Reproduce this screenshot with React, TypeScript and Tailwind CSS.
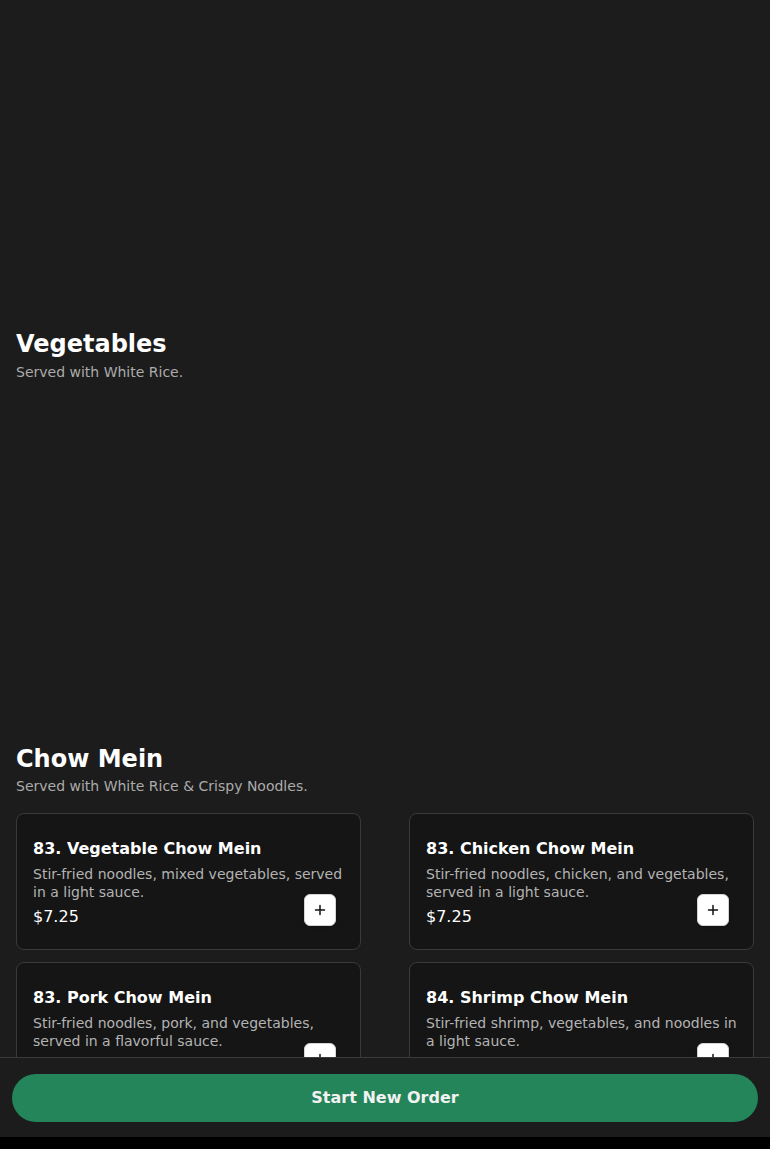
import React from "react";

type Item = { name: string; desc: string; price: string };

const items: Item[] = [
  { name: "83. Vegetable Chow Mein", desc: "Stir-fried noodles, mixed vegetables, served in a light sauce.", price: "$7.25" },
  { name: "83. Chicken Chow Mein", desc: "Stir-fried noodles, chicken, and vegetables, served in a light sauce.", price: "$7.25" },
  { name: "83. Pork Chow Mein", desc: "Stir-fried noodles, pork, and vegetables, served in a flavorful sauce.", price: "$7.25" },
  { name: "84. Shrimp Chow Mein", desc: "Stir-fried shrimp, vegetables, and noodles in a light sauce.", price: "$7.95" },
];

function PlusIcon() {
  return (
    <svg width="12" height="12" viewBox="0 0 12 12" fill="none">
      <path d="M6 1.5v9M1.5 6h9" stroke="#111" strokeWidth="1.5" strokeLinecap="round" />
    </svg>
  );
}

function Card({ item }: { item: Item }) {
  return (
    <div className="relative rounded-lg border border-[#3a3a3a] bg-[#151515] px-4 pt-[23px] pb-5">
      <div className="text-[16px] leading-6 font-bold text-white">{item.name}</div>
      <div className="mt-[5px] text-[14px] leading-[17.5px] text-[#b3b3b3]">{item.desc}</div>
      <div className="mt-1 text-[16px] leading-6 text-white">{item.price}</div>
      <button className="absolute right-6 bottom-[23px] flex h-8 w-8 items-center justify-center rounded-md border border-[#d4d4d4] bg-white shadow-sm">
        <PlusIcon />
      </button>
    </div>
  );
}

export default function App() {
  return (
    <div
      className="min-h-screen bg-[#1c1c1c] text-white"
      style={{ fontFamily: '"DejaVu Sans", sans-serif' }}
    >
      <div className="px-4 pb-32">
        <div className="h-[328px]" />
        <section>
          <h2 className="text-[24px] leading-8 font-bold">Vegetables</h2>
          <p className="mt-[2px] text-[14px] leading-5 text-[#ababab]">Served with White Rice.</p>
        </section>
        <div className="h-[361px]" />
        <section>
          <h2 className="text-[24px] leading-8 font-bold">Chow Mein</h2>
          <p className="mt-[1px] text-[14px] leading-5 text-[#ababab]">Served with White Rice &amp; Crispy Noodles.</p>
          <div className="mt-[17px] grid grid-cols-2 gap-x-12 gap-y-3">
            {items.map((it) => (
              <Card key={it.name} item={it} />
            ))}
          </div>
        </section>
      </div>
      <div className="fixed inset-x-0 bottom-0">
        <div className="border-t border-[#3a3a3a] bg-[#1c1c1c] px-3 pt-4 pb-[15px]">
          <button className="flex h-12 w-full items-center justify-center rounded-full bg-[#238559] text-[16px] font-bold text-[#f2f2f2]">
            Start New Order
          </button>
        </div>
        <div className="h-3 bg-black" />
      </div>
    </div>
  );
}
